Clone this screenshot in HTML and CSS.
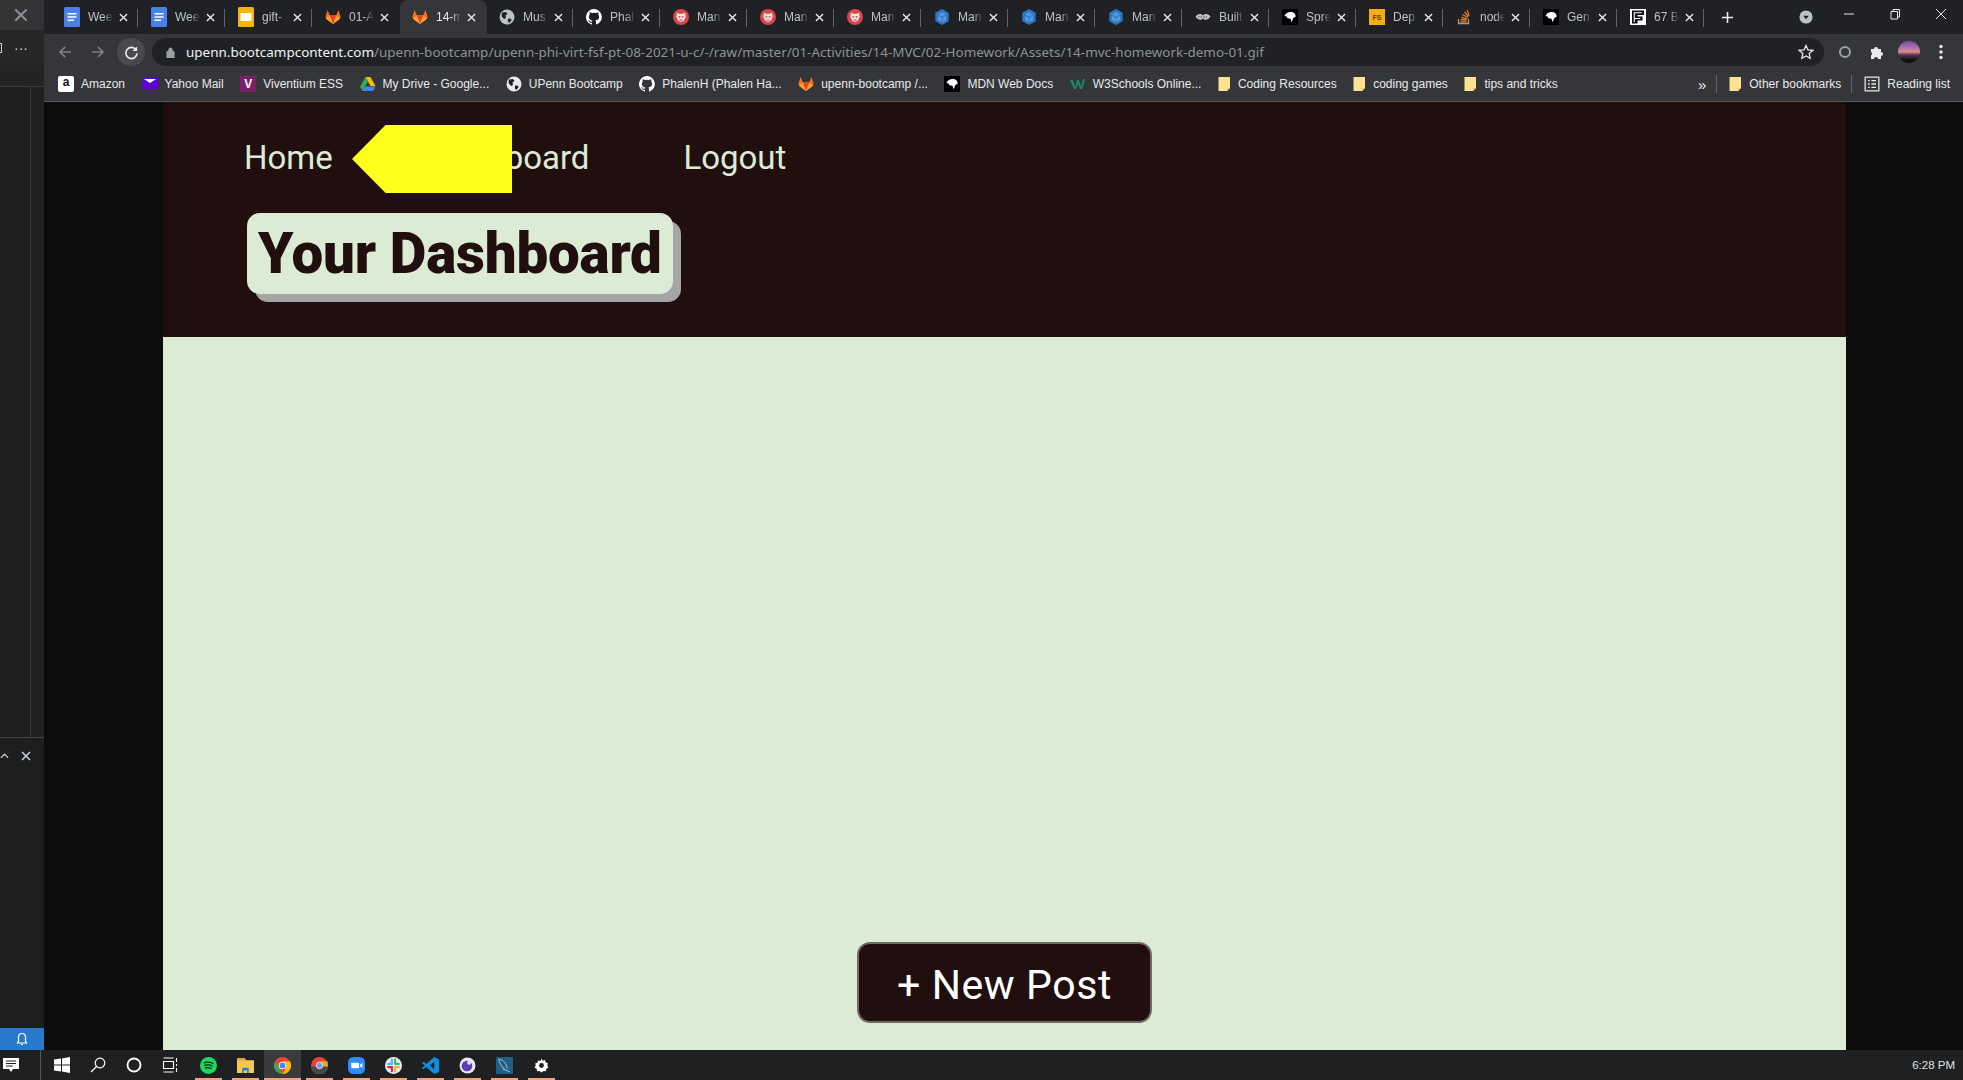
FILE: index.html
```html
<!DOCTYPE html>
<html lang="en">
<head>
<meta charset="utf-8">
<title>14-mvc-homework-demo-01.gif</title>
<link rel="stylesheet" href="styles.css">
</head>
<body>
<svg class="defs" width="0" height="0" aria-hidden="true">
  <defs>
    <symbol id="doc" viewBox="0 0 16 20"><rect width="16" height="20" rx="1.5" fill="#4a80ee"/><path d="M3.5 6h9v1.6h-9zM3.5 9.2h9v1.6h-9zM3.5 12.4h6.5v1.6h-6.5z" fill="#fff"/></symbol>
    <symbol id="slide" viewBox="0 0 16 20"><rect width="16" height="20" rx="1.5" fill="#f2b50f"/><rect x="2.5" y="6" width="11" height="8" fill="#fff"/></symbol>
    <symbol id="gitlab" viewBox="0 0 16 16"><path d="M8 15 1 9.8 0.4 7.7 2.6 1 4.7 6.2h6.6L13.4 1l2.2 6.7-.6 2.1z" fill="#fc6d26"/><path d="M8 15 4.7 6.2h6.6z" fill="#e24329"/><path d="M8 15 1 9.8 4.7 6.2zM8 15l7-5.2-3.7-3.6z" fill="#fca326"/></symbol>
    <symbol id="globe" viewBox="0 0 16 16"><circle cx="8" cy="8" r="7.5" fill="currentColor"/><path d="M3 3.5 7 3l1.5 2-2 1.5.5 2.5-2 1-2.5-3zM9 9.5l3 .2.5 1.8-2.5 2.5-1.2-2z" fill="#202124"/></symbol>
    <symbol id="github" viewBox="0 0 16 16"><path fill="#fff" d="M8 0a8 8 0 0 0-2.5 15.6c.4.1.5-.2.5-.4v-1.4c-2.2.5-2.7-1-2.7-1-.4-.9-.9-1.200-.9-1.200-.7-.5.1-.5.1-.5.8.1 1.200.8 1.200.8.7 1.200 1.900.9 2.300.7.1-.5.3-.9.5-1.100-1.800-.2-3.600-.9-3.600-4 0-.9.3-1.600.8-2.100-.1-.2-.4-1 .1-2.100 0 0 .7-.2 2.200.8a7.600 7.600 0 0 1 4 0c1.500-1 2.200-.8 2.200-.8.4 1.100.2 1.900.1 2.100.5.6.8 1.300.8 2.100 0 3.100-1.900 3.700-3.700 3.900.3.300.6.800.6 1.500v2.200c0 .2.100.5.600.4A8 8 0 0 0 8 0z"/></symbol>
    <symbol id="lion" viewBox="0 0 16 16"><circle cx="8" cy="8" r="8" fill="#d9464a"/><path d="M4 3.500 6 4.800h4l2-1.300.7 4.200L11 11.500 8 13 5 11.500 3.300 7.700z" fill="#f3e3e3"/><path d="M5.500 7.300h1.800v1.300H5.500zM8.700 7.300h1.800v1.300H8.700zM6.500 10.500h3v1h-3z" fill="#c9343a"/></symbol>
    <symbol id="cube" viewBox="0 0 16 18"><path d="M8 0l7.500 4.300v9.400L8 18 .5 13.700V4.300z" fill="#2a78c8"/><path d="M8 8.800 3.500 6.200 8 3.600l4.500 2.600zM7.500 10v5L3.500 12.400V7.400zM8.500 10l4-2.600v5L8.500 15z" fill="#7fb5ea" opacity=".55"/></symbol>
    <symbol id="stache" viewBox="0 0 16 8"><path d="M8 2.500C6 .5 3.500.5.500 3.500 3 7.500 6 7.500 8 5.500c2 2 5 2 7.500-2C12.500.5 10 .5 8 2.500z" fill="#c4c4c4"/><path d="M3 4h10" stroke="#4a4a4a" stroke-width="1" stroke-dasharray="1.500 1"/></symbol>
    <symbol id="mdn" viewBox="0 0 16 16"><rect width="16" height="16" fill="#000"/><path d="M2.500 7C3.500 3.500 7 2.500 10 3c2.500.5 4 2.500 3.500 5-1 .5-2 .5-2.500 1.500-.5 1.500-.5 2.500-1.500 3.500L8.500 9.700 5.500 9.300 4.500 7.500z" fill="#fff"/></symbol>
    <symbol id="fs" viewBox="0 0 16 16"><rect width="16" height="16" fill="#f4ad16"/><text x="8" y="11" text-anchor="middle" class="fs-text">FS</text></symbol>
    <symbol id="so" viewBox="0 0 16 16"><path d="M2.500 10v4.500h10V10" fill="none" stroke="#a79a8f" stroke-width="1.300"/><path d="M4.500 12.800h6M4.700 10.600l6 .6M5.200 8.300l5.900 1.500M6.500 5.500l5.300 3M8.600 3l4 4.600M11 1.200l2.200 5.300" stroke="#f48024" stroke-width="1.200"/></symbol>
    <symbol id="ff" viewBox="0 0 16 16"><rect width="16" height="16" fill="#fff"/><path d="M2 1.500h12v4.500H7.500v1.500h5v4H7.500v3H2z" fill="#111"/><path d="M4.300 13V3.800h7.500M4.300 9.500h6" fill="none" stroke="#fff" stroke-width="1.100"/></symbol>
    <symbol id="folder" viewBox="0 0 12 16"><path d="M0 1h11.500v11l-3 3H0z" fill="#fde293"/><path d="M8.500 15v-3h3z" fill="#e8c76b"/></symbol>
    <symbol id="x" viewBox="0 0 10 10"><path d="M1 1l8 8M9 1l-8 8" stroke="currentColor" stroke-width="1.500" fill="none"/></symbol>
  </defs>
</svg>

<div class="desktop">
  <aside class="side">
    <div class="side-top"><svg class="side-x"><use href="#x"/></svg></div>
    <div class="side-menu"><span class="side-bracket"></span><span class="side-dots">···</span></div>
    <div class="side-band"></div>
    <div class="side-rows"><div class="side-col"></div></div>
    <div class="side-panel">
      <svg class="side-chev" viewBox="0 0 10 6"><path d="M1 5l4-4 4 4" fill="none" stroke="#b8c4cc" stroke-width="1.400"/></svg>
      <svg class="side-close"><use href="#x"/></svg>
    </div>
    <div class="side-bell">
      <svg viewBox="0 0 12 14" class="bell"><path d="M6 1.500a3.500 3.500 0 0 0-3.500 3.500v4L1.500 11h9l-1-2V5A3.500 3.500 0 0 0 6 1.500zM5 12.500h2" fill="none" stroke="#fff" stroke-width="1.200"/></svg>
    </div>
  </aside>

  <div class="browser">
    <div class="tabstrip">
      <div class="tab"><svg class="fav fav-tall"><use href="#doc"/></svg><span class="tab-title">Wee</span><svg class="tab-x"><use href="#x"/></svg></div>
      <div class="tab"><svg class="fav fav-tall"><use href="#doc"/></svg><span class="tab-title">Wee</span><svg class="tab-x"><use href="#x"/></svg></div>
      <div class="tab"><svg class="fav fav-tall"><use href="#slide"/></svg><span class="tab-title">gift-</span><svg class="tab-x"><use href="#x"/></svg></div>
      <div class="tab tab-noline"><svg class="fav"><use href="#gitlab"/></svg><span class="tab-title">01-A</span><svg class="tab-x"><use href="#x"/></svg></div>
      <div class="tab tab-active tab-noline"><svg class="fav"><use href="#gitlab"/></svg><span class="tab-title">14-m</span><svg class="tab-x"><use href="#x"/></svg></div>
      <div class="tab"><svg class="fav fav-globe"><use href="#globe"/></svg><span class="tab-title">Mus</span><svg class="tab-x"><use href="#x"/></svg></div>
      <div class="tab"><svg class="fav"><use href="#github"/></svg><span class="tab-title">Phal</span><svg class="tab-x"><use href="#x"/></svg></div>
      <div class="tab"><svg class="fav"><use href="#lion"/></svg><span class="tab-title">Man</span><svg class="tab-x"><use href="#x"/></svg></div>
      <div class="tab"><svg class="fav"><use href="#lion"/></svg><span class="tab-title">Man</span><svg class="tab-x"><use href="#x"/></svg></div>
      <div class="tab"><svg class="fav"><use href="#lion"/></svg><span class="tab-title">Man</span><svg class="tab-x"><use href="#x"/></svg></div>
      <div class="tab"><svg class="fav"><use href="#cube"/></svg><span class="tab-title">Man</span><svg class="tab-x"><use href="#x"/></svg></div>
      <div class="tab"><svg class="fav"><use href="#cube"/></svg><span class="tab-title">Man</span><svg class="tab-x"><use href="#x"/></svg></div>
      <div class="tab"><svg class="fav"><use href="#cube"/></svg><span class="tab-title">Man</span><svg class="tab-x"><use href="#x"/></svg></div>
      <div class="tab"><svg class="fav"><use href="#stache"/></svg><span class="tab-title">Built</span><svg class="tab-x"><use href="#x"/></svg></div>
      <div class="tab"><svg class="fav"><use href="#mdn"/></svg><span class="tab-title">Spre</span><svg class="tab-x"><use href="#x"/></svg></div>
      <div class="tab"><svg class="fav"><use href="#fs"/></svg><span class="tab-title">Dep</span><svg class="tab-x"><use href="#x"/></svg></div>
      <div class="tab"><svg class="fav"><use href="#so"/></svg><span class="tab-title">node</span><svg class="tab-x"><use href="#x"/></svg></div>
      <div class="tab"><svg class="fav"><use href="#mdn"/></svg><span class="tab-title">Gen</span><svg class="tab-x"><use href="#x"/></svg></div>
      <div class="tab"><svg class="fav"><use href="#ff"/></svg><span class="tab-title">67 B</span><svg class="tab-x"><use href="#x"/></svg></div>
      <svg class="newtab" viewBox="0 0 14 14"><path d="M7 1v12M1 7h12" stroke="#e8eaed" stroke-width="1.700"/></svg>
      <svg class="tabsearch" viewBox="0 0 16 16"><circle cx="8" cy="8" r="7.500" fill="#bdc1c6"/><path d="M4.800 6.500h6.400L8 10.500z" fill="#202124"/></svg>
      <div class="winctl">
        <svg viewBox="0 0 12 12"><path d="M1 6h10" stroke="#e8eaed" stroke-width="1"/></svg>
        <svg viewBox="0 0 12 12"><path d="M2 3.500h6.500V11H2zM4 3.500V1.500h6.500V9H8.500" fill="none" stroke="#e8eaed" stroke-width="1"/></svg>
        <svg viewBox="0 0 12 12"><path d="M1 1l10 10M11 1L1 11" stroke="#e8eaed" stroke-width="1"/></svg>
      </div>
    </div>

    <div class="toolbar">
      <svg class="nav-btn" viewBox="0 0 16 16"><path d="M14 8H3M8 3L3 8l5 5" fill="none" stroke="#7c7f84" stroke-width="1.700"/></svg>
      <svg class="nav-btn" viewBox="0 0 16 16"><path d="M2 8h11M8 3l5 5-5 5" fill="none" stroke="#7c7f84" stroke-width="1.700"/></svg>
      <div class="reload"><svg viewBox="0 0 16 16"><path d="M13.200 5.500A6 6 0 1 0 14 9" fill="none" stroke="#e8eaed" stroke-width="1.700"/><path d="M14 1.500v5H9z" fill="#e8eaed"/></svg></div>
      <div class="omnibox">
        <svg class="lock" viewBox="0 0 10 12"><path d="M1 5h8v7H1zM3 5V3a2 2 0 0 1 4 0v2" fill="#9aa0a6" stroke="#9aa0a6" stroke-width="1" fill-rule="evenodd"/></svg>
        <span class="url"><span class="url-host">upenn.bootcampcontent.com</span>/upenn-bootcamp/upenn-phi-virt-fsf-pt-08-2021-u-c/-/raw/master/01-Activities/14-MVC/02-Homework/Assets/14-mvc-homework-demo-01.gif</span>
        <svg class="star" viewBox="0 0 16 16"><path d="M8 1.500l2 4.400 4.800.5-3.600 3.200 1 4.700L8 11.900l-4.200 2.400 1-4.700L1.200 6.400 6 5.900z" fill="none" stroke="#e8eaed" stroke-width="1.300"/></svg>
      </div>
      <svg class="tool-ring" viewBox="0 0 14 14"><circle cx="7" cy="7" r="5" fill="none" stroke="#9aa0a6" stroke-width="2"/></svg>
      <svg class="tool-puzzle" viewBox="0 0 16 16"><path d="M2 5h3a2 2 0 0 1 4 0h3v3a2 2 0 0 1 0 4v3H9a2 2 0 0 0-4 0H2v-3.500a2 2 0 0 0 0-3.500z" fill="#e8eaed"/></svg>
      <div class="avatar"></div>
      <svg class="tool-menu" viewBox="0 0 4 16"><circle cx="2" cy="2.500" r="1.700" fill="#e8eaed"/><circle cx="2" cy="8" r="1.700" fill="#e8eaed"/><circle cx="2" cy="13.500" r="1.700" fill="#e8eaed"/></svg>
    </div>

    <div class="bookmarks">
      <div class="bm"><span class="bm-amazon">a</span>Amazon</div>
      <div class="bm"><svg class="bm-ico" viewBox="0 0 16 12"><path d="M0 0h16v12H0z" fill="#5f01d1"/><path d="M2 1l6 4 6-4z" fill="#fff"/></svg>Yahoo Mail</div>
      <div class="bm"><span class="bm-v">V</span>Viventium ESS</div>
      <div class="bm"><svg class="bm-ico" viewBox="0 0 16 14"><path d="M5.500 0h5l5 9h-5z" fill="#fbbc04"/><path d="M5.500 0l-5.500 9.500L2.500 14l5.500-9.500z" fill="#34a853"/><path d="M2.500 14h10.500l2.500-4.500H5.300z" fill="#4285f4"/></svg>My Drive - Google...</div>
      <div class="bm"><svg class="bm-ico bm-globe"><use href="#globe"/></svg>UPenn Bootcamp</div>
      <div class="bm"><svg class="bm-ico"><use href="#github"/></svg>PhalenH (Phalen Ha...</div>
      <div class="bm"><svg class="bm-ico"><use href="#gitlab"/></svg>upenn-bootcamp /...</div>
      <div class="bm"><svg class="bm-ico"><use href="#mdn"/></svg>MDN Web Docs</div>
      <div class="bm"><svg class="bm-ico" viewBox="0 0 16 12"><path d="M0 2h3l2 7 2-7h2l2 7 2-8h2l-3 10h-2L8 6l-2 5H4z" fill="#1f8a5b"/></svg>W3Schools Online...</div>
      <div class="bm"><svg class="bm-folder"><use href="#folder"/></svg>Coding Resources</div>
      <div class="bm"><svg class="bm-folder"><use href="#folder"/></svg>coding games</div>
      <div class="bm"><svg class="bm-folder"><use href="#folder"/></svg>tips and tricks</div>
      <div class="bm-end">
        <span class="bm-more">»</span>
        <span class="bm-sep"></span>
        <div class="bm"><svg class="bm-folder"><use href="#folder"/></svg>Other bookmarks</div>
        <span class="bm-sep"></span>
        <div class="bm"><svg class="bm-ico" viewBox="0 0 14 14"><path d="M1 1h12v12H1zM3.500 4h1.500M6.500 4h4M3.500 7h1.500M6.500 7h4M3.500 10h1.500M6.500 10h4" fill="none" stroke="#e8eaed" stroke-width="1.100"/></svg>Reading list</div>
      </div>
    </div>

    <div class="viewer">
      <div class="app">
        <header class="app-head">
          <nav class="app-nav">
            <a class="app-link">Home</a>
            <a class="app-link">Dashboard</a>
            <a class="app-link app-link-last">Logout</a>
          </nav>
          <h1 class="app-title">Your Dashboard</h1>
          <div class="marker"></div>
        </header>
        <main class="app-main">
          <button class="new-post">+ New Post</button>
        </main>
      </div>
    </div>
  </div>
</div>

<footer class="taskbar">
  <svg class="tb-action" viewBox="0 0 16 16"><path d="M0 1h16v11h-6l-2 3-2-3H0z" fill="#fff"/><path d="M3 4h10M3 6.500h10M3 9h7" stroke="#202124" stroke-width="1"/></svg>
  <span class="tb-divider"></span>
  <svg class="tb-win" viewBox="0 0 16 16"><path d="M0 2.500 7 1.500V7.500H0zM8 1.400 16 0V7.500H8zM0 8.500H7V14.500L0 13.500zM8 8.500h8V16L8 14.600z" fill="#fff"/></svg>
  <svg class="tb-search" viewBox="0 0 16 16"><circle cx="10" cy="6" r="4.800" fill="none" stroke="#fff" stroke-width="1.200"/><path d="M6.500 9.500L1 15" stroke="#fff" stroke-width="1.300"/></svg>
  <svg class="tb-cortana" viewBox="0 0 16 16"><circle cx="8" cy="8" r="6.500" fill="none" stroke="#fff" stroke-width="1.800"/></svg>
  <svg class="tb-tasks" viewBox="0 0 16 16"><path d="M1 4.500h10v7H1zM1 1h10M1 15h10M14 1v4M14 7v2M14 11v4" fill="none" stroke="#fff" stroke-width="1.100"/></svg>
  <div class="tb-apps">
    <div class="tb-app"><svg viewBox="0 0 16 16"><circle cx="8" cy="8" r="8" fill="#1ed760"/><path d="M3.500 5.500c3-1 6.500-.8 9 .7M4 8c2.500-.8 5.500-.6 7.800.7M4.500 10.500c2-.6 4.500-.5 6.500.6" fill="none" stroke="#13261a" stroke-width="1.200"/></svg></div>
    <div class="tb-app"><svg viewBox="0 0 16 14"><path d="M0 0h7l1.500 2H16v12H0z" fill="#f6c94b"/><path d="M0 0h7l1.500 2H0z" fill="#e0a526"/><path d="M5 9h6v5H9.500v-2.500h-3V14H5z" fill="#1f7fd6"/></svg></div>
    <div class="tb-app tb-app-open"><svg viewBox="0 0 16 16"><circle cx="8" cy="8" r="8" fill="#ea4335"/><path d="M8 16a8 8 0 0 1-6.900-12L5 10.500z" fill="#34a853"/><path d="M8 4h7a8 8 0 0 1-7 12l3.500-6z" fill="#fbbc04"/><circle cx="8" cy="8" r="3.600" fill="#fff"/><circle cx="8" cy="8" r="2.800" fill="#4285f4"/></svg></div>
    <div class="tb-app"><svg viewBox="0 0 16 16"><circle cx="8" cy="8" r="8" fill="#ea4335"/><path d="M0 9h16a8 8 0 0 1-16 0z" fill="#4a4a44"/><path d="M8 4h7.500l.5 5H12z" fill="#d9b21f"/><circle cx="8" cy="8" r="3" fill="#6fa0e8" stroke="#eee" stroke-width=".8"/></svg></div>
    <div class="tb-app"><svg viewBox="0 0 16 16"><rect width="16" height="16" rx="5" fill="#2d8cff"/><path d="M3 5.500h6.500a1 1 0 0 1 1 1V10.500H4a1 1 0 0 1-1-1zM11.200 7.500 13.500 5.500v5L11.200 8.500z" fill="#fff"/></svg></div>
    <div class="tb-app"><svg viewBox="0 0 16 16"><circle cx="8" cy="8" r="8" fill="#eeeeee"/><path d="M6.500 2.500v4M3 6.500h3" stroke="#36c5f0" stroke-width="2" stroke-linecap="round"/><path d="M9.500 2.500v4M13 6.500h-3" stroke="#2eb67d" stroke-width="2" stroke-linecap="round"/><path d="M6.500 13.500v-4M3 9.500h3" stroke="#e01e5a" stroke-width="2" stroke-linecap="round"/><path d="M9.500 13.500v-4M13 9.500h-3" stroke="#ecb22e" stroke-width="2" stroke-linecap="round"/></svg></div>
    <div class="tb-app"><svg viewBox="0 0 16 16"><path d="M11.500 0 16 2v12l-4.500 2L4 9.500 1.500 11.500 0 10.500 2.500 8 0 5.500l1.500-1L4 6.500zM11.500 4.500 7.500 8l4 3.500z" fill="#0f8ee0"/></svg></div>
    <div class="tb-app"><svg viewBox="0 0 16 16"><circle cx="8" cy="8" r="7.500" fill="#e6e6f0"/><circle cx="7.500" cy="8.500" r="5" fill="#5b3fb5"/><circle cx="9.500" cy="5.500" r="1.800" fill="#e6e6f0"/></svg></div>
    <div class="tb-app"><svg viewBox="0 0 16 16"><rect width="16" height="16" rx="1" fill="#1f5f86"/><path d="M3 2c4 1 7 4 7.500 9M2.500 2c1 4 2.500 7 5.500 9M6 11l7 3" fill="none" stroke="#a6c8da" stroke-width=".9"/></svg></div>
    <div class="tb-app"><svg viewBox="0 0 16 16"><path d="M8 1.500l1 2 2.200-.6.700 2.100 2.100.8-.6 2.200 1.100 2-2 1.100-.4 2.200-2.200-.2L8 14.500l-1.900-1.400-2.200.2-.4-2.200-2-1.100 1.100-2L2 6.100 4.100 5.300l.7-2.100L7 3.800z" fill="#fff"/><circle cx="8" cy="8" r="2.300" fill="#202124"/></svg></div>
  </div>
  <span class="tb-clock">6:28 PM</span>
</footer>
</body>
</html>
```
FILE: styles.css
```css
* { box-sizing: border-box; }
html, body { margin: 0; padding: 0; }
body { width: 1963px; height: 1080px; overflow: hidden; display: flex; flex-direction: column; background: #0c0c0c; font-family: "Roboto", "Liberation Sans", sans-serif; }
.defs { position: absolute; }
.fs-text { font: bold 7px "Liberation Sans", sans-serif; fill: #5a3c00; }

.desktop { flex: 1; display: flex; min-height: 0; }

/* Left slice of another window */
.side { width: 44px; flex: none; display: flex; flex-direction: column; background: #1e1e1e; }
.side-top { height: 30px; background: #333435; display: flex; justify-content: center; align-items: center; padding-right: 2px; }
.side-x { width: 14px; height: 14px; color: #8f9194; }
.side-menu { height: 35px; display: flex; align-items: center; justify-content: space-between; padding: 0 16px 0 0; background: #272727; }
.side-bracket { width: 2px; height: 10px; border: 1px solid #ccc; border-left: 0; }
.side-dots { color: #ccc; font: 14px "Liberation Sans", sans-serif; }
.side-band { height: 22px; background: #232323; border-bottom: 1px solid #3a3a3a; }
.side-rows { height: 650px; display: flex; justify-content: flex-end; }
.side-col { width: 14px; border-left: 1px solid #3a3a3a; background: #202020; }
.side-panel { flex: 1; border-top: 1px solid #444; display: flex; align-items: flex-start; gap: 12px; padding: 10px 0 0 0; }
.side-chev { width: 9px; height: 6px; margin-top: 5px; }
.side-close { width: 10px; height: 10px; margin-top: 3px; color: #c9d3da; }
.side-bell { height: 22px; background: #2878cc; display: flex; align-items: center; justify-content: center; }
.bell { width: 12px; height: 14px; }

.browser { flex: 1; display: flex; flex-direction: column; min-width: 0; }

/* Tab strip */
.tabstrip { height: 34px; flex: none; background: #202124; display: flex; align-items: center; padding-left: 8px; color: #e8eaed; }
.tab { width: 87px; height: 34px; flex: none; position: relative; display: flex; align-items: center; padding: 0 0 0 12px; border-right: 1px solid transparent; }
.tab::after { content: ""; position: absolute; right: 0; top: 9px; height: 18px; width: 1px; background: #5f6368; }
.tab-noline::after { display: none; }
.tab-active { background: #35363a; border-radius: 8px 8px 0 0; }
.fav { width: 16px; height: 16px; flex: none; color: #bdc1c6; }
.fav-tall { height: 20px; }
.tab-title { width: 28px; margin-left: 8px; overflow: hidden; white-space: nowrap; font: 12px "Liberation Sans", sans-serif; color: #bdc1c6; -webkit-mask-image: linear-gradient(90deg, #000 55%, transparent 90%); mask-image: linear-gradient(90deg, #000 55%, transparent 90%); }
.tab-active .tab-title { color: #e8eaed; }
.tab-x { width: 9px; height: 9px; margin-left: 3px; flex: none; color: #e8eaed; }
.newtab { width: 13px; height: 13px; margin-left: 16px; flex: none; }
.tabsearch { width: 14px; height: 14px; margin-left: 65px; flex: none; }
.winctl { margin-left: auto; display: flex; align-items: center; gap: 34px; padding: 0 16px 6px 0; }
.winctl svg { width: 12px; height: 12px; }

/* Toolbar */
.toolbar { height: 34px; flex: none; background: #35363a; display: flex; align-items: center; padding: 2px 0 0 13px; }
.nav-btn { width: 16px; height: 16px; flex: none; margin-right: 17px; }
.reload { width: 28px; height: 28px; flex: none; margin-left: -6px; border-radius: 50%; background: #494a4e; display: flex; align-items: center; justify-content: center; }
.reload svg { width: 15px; height: 15px; }
.omnibox { width: 1672px; height: 28px; flex: none; margin-left: 7px; background: #202124; border-radius: 14px; display: flex; align-items: center; padding: 0 10px 0 14px; }
.lock { width: 9px; height: 11px; flex: none; }
.url { margin-left: 11px; font: 13.460px "Noto Sans", sans-serif; color: #8d9196; white-space: nowrap; }
.url-host { color: #f1f3f4; }
.star { width: 16px; height: 16px; margin-left: auto; flex: none; }
.tool-ring { width: 14px; height: 14px; margin-left: 14px; flex: none; }
.tool-puzzle { width: 16px; height: 16px; margin-left: 17px; flex: none; }
.avatar { width: 22px; height: 22px; margin-left: 13px; flex: none; border-radius: 50%; background: linear-gradient(180deg, #6c4fa5 0%, #b06fb0 30%, #e08a8a 50%, #5a3a5a 62%, #111 85%); }
.tool-menu { width: 4px; height: 16px; margin-left: 19px; flex: none; }

/* Bookmarks */
.bookmarks { height: 34px; flex: none; background: #35363a; border-bottom: 1px solid #55565a; display: flex; align-items: center; padding: 0 0 1px 14px; font: 12px "Liberation Sans", sans-serif; color: #e8eaed; }
.bm { display: flex; align-items: center; gap: 7px; margin-right: 16.500px; white-space: nowrap; flex: none; }
.bm-ico { width: 16px; height: 16px; flex: none; color: #e8eaed; }
.bm-folder { width: 13px; height: 16px; flex: none; }
.bm-amazon { width: 16px; height: 16px; border-radius: 2px; background: #fff; color: #111; font-weight: bold; text-align: center; line-height: 13px; }
.bm-v { width: 16px; height: 16px; background: #7b1f66; color: #fff; font-weight: bold; text-align: center; line-height: 16px; }
.bm-end { margin-left: auto; display: flex; align-items: center; }
.bm-end .bm { margin-right: 10px; }
.bm-end .bm:last-child { margin-right: 13px; }
.bm-more { color: #e8eaed; font-size: 15px; margin-right: 10px; line-height: 1; }
.bm-sep { width: 1px; height: 18px; background: #5f6368; margin-right: 12px; }

/* Viewer + pictured app */
.viewer { flex: 1; min-height: 0; background: #0c0c0c; padding: 0 117px 0 119px; display: flex; }
.app { flex: 1; display: flex; flex-direction: column; }
.app-head { height: 235px; flex: none; background: #210f0f; position: relative; padding: 33px 0 0 81px; }
.app-nav { display: flex; gap: 97px; height: 44px; align-items: center; }
.app-link { font-size: 33px; color: #dcebd3; }
.app-link-last { margin-left: -3px; }
.app-title { display: inline-block; margin: 34px 0 0 3px; height: 81px; padding: 0 11px; background: #dcebd3; color: #210f0f; font-size: 56.500px; line-height: 83px; font-weight: 900; letter-spacing: -.2px; border-radius: 13px; box-shadow: 8px 8px 0 #a5a5a5; }
.marker { position: absolute; left: 189px; top: 23px; width: 160px; height: 68px; background: #ffff1c; clip-path: polygon(0 50%, 21% 0, 100% 0, 100% 100%, 21% 100%); }
.app-main { flex: 1; background: #dcebd3; display: flex; justify-content: center; align-items: flex-end; padding-bottom: 27px; }
.new-post { width: 295px; height: 81px; background: #210f0f; border: 2px solid #6f6a66; border-radius: 13px; color: #fff; font: 400 41px "Roboto", sans-serif; letter-spacing: .6px; padding: 4px 0 0; }

/* Taskbar */
.taskbar { height: 30px; flex: none; background: #1f2022; display: flex; align-items: center; position: relative; }
.tb-action { width: 16px; height: 16px; margin-left: 3px; flex: none; }
.tb-divider { width: 1px; height: 30px; background: #55565a; margin-left: 21px; }
.tb-win { width: 16px; height: 16px; margin-left: 13px; flex: none; }
.tb-search { width: 16px; height: 16px; margin-left: 20px; flex: none; }
.tb-cortana { width: 16px; height: 16px; margin-left: 20px; flex: none; }
.tb-tasks { width: 17px; height: 16px; margin-left: 20px; flex: none; }
.tb-apps { display: flex; margin-left: 11px; }
.tb-app { width: 37px; height: 30px; display: flex; align-items: center; justify-content: center; position: relative; }
.tb-app svg { width: 17px; height: 17px; }
.tb-app::after { content: ""; position: absolute; left: 5px; right: 5px; bottom: 0; height: 2px; background: #f4a37a; }
.tb-app-open { background: #3a3b3d; }
.tb-app-open::after { left: 0; right: 0; }
.tb-clock { margin-left: auto; padding-right: 8px; font: 11.500px "Liberation Sans", sans-serif; color: #e0e0e0; }
```
